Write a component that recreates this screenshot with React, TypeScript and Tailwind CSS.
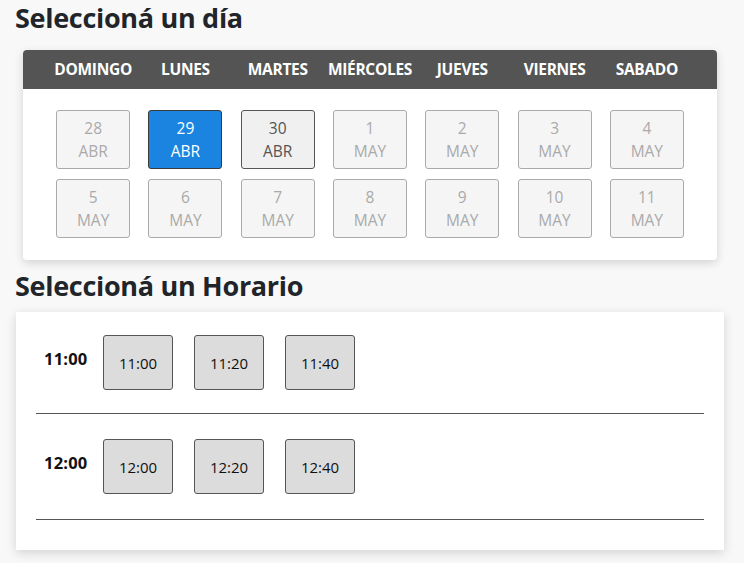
import React from "react";

const days = ["DOMINGO", "LUNES", "MARTES", "MIÉRCOLES", "JUEVES", "VIERNES", "SABADO"];
type D = { n: string; m: string; s: "off" | "sel" | "on" };
const row1: D[] = [
  { n: "28", m: "ABR", s: "off" },
  { n: "29", m: "ABR", s: "sel" },
  { n: "30", m: "ABR", s: "on" },
  { n: "1", m: "MAY", s: "off" },
  { n: "2", m: "MAY", s: "off" },
  { n: "3", m: "MAY", s: "off" },
  { n: "4", m: "MAY", s: "off" },
];
const row2: D[] = ["5", "6", "7", "8", "9", "10", "11"].map((n) => ({ n, m: "MAY", s: "off" as const }));

function DayBox({ d }: { d: D }) {
  const cls =
    d.s === "sel"
      ? "bg-[#1a84e0] border-[#3a3a3a] text-white"
      : d.s === "on"
      ? "bg-[#f0f0f0] border-[#555] text-[#555]"
      : "bg-[#f5f5f5] border-[#aaa] text-[#aaa]";
  return (
    <div className="flex justify-center">
      <div className={`w-[74px] h-[59px] border rounded-[3px] flex flex-col items-center justify-center text-[15.5px] leading-[23px] ${cls}`}>
        <span>{d.n}</span>
        <span>{d.m}</span>
      </div>
    </div>
  );
}

function Slot({ t }: { t: string }) {
  return (
    <div className="w-[70px] h-[55px] border border-[#555] rounded-[3px] bg-[#dcdcdc] flex items-center justify-center text-[15px] text-[#111] pt-[2px]">
      {t}
    </div>
  );
}

function HourRow({ h, slots, pb }: { h: string; slots: string[]; pb: string }) {
  return (
    <div className="border-b border-[#555]">
      <div className={`flex items-start ${pb}`}>
        <div className="w-[67px] pl-[8px] pt-[12px] font-bold text-[16.5px] text-[#111] tracking-[0.2px]">{h}</div>
        <div className="flex gap-[21px]">
          {slots.map((s) => (
            <Slot key={s} t={s} />
          ))}
        </div>
      </div>
    </div>
  );
}

export default function App() {
  return (
    <div
      className="min-h-[563px] bg-[#f8f8f8] text-[#212529]"
      style={{ fontFamily: '"Open Sans", "Noto Sans", sans-serif' }}
    >
      <div className="pt-[1px] pl-[15px]">
        <h1 className="text-[27px] font-bold leading-[34px] tracking-[-0.3px]">Seleccioná un día</h1>
      </div>
      <div className="ml-[23px] mr-[27px] mt-[15px] bg-white rounded-[4px] shadow-[0_3px_10px_rgba(0,0,0,0.15)]">
        <div className="h-[39px] bg-[#545454] rounded-t-[4px] px-[24px] grid grid-cols-7 items-center">
          {days.map((d) => (
            <div key={d} className="text-center text-white font-bold text-[15.5px] tracking-[-0.3px] whitespace-nowrap">
              {d}
            </div>
          ))}
        </div>
        <div className="px-[24px] pt-[21px] pb-[22px] grid grid-cols-7 gap-y-[10px]">
          {row1.map((d, i) => (
            <DayBox key={"a" + i} d={d} />
          ))}
          {row2.map((d, i) => (
            <DayBox key={"b" + i} d={d} />
          ))}
        </div>
      </div>
      <div className="pl-[15px] mt-[9px]">
        <h1 className="text-[27px] font-bold leading-[34px] tracking-[-0.3px]">Seleccioná un Horario</h1>
      </div>
      <div className="ml-[16px] mr-[20px] mt-[9px] bg-white shadow-[0_3px_10px_rgba(0,0,0,0.15)] px-[20px] pt-[23px] pb-[30px]">
        <HourRow h="11:00" slots={["11:00", "11:20", "11:40"]} pb="pb-[23px]" />
        <div className="pt-[25px]">
          <HourRow h="12:00" slots={["12:00", "12:20", "12:40"]} pb="pb-[25px]" />
        </div>
      </div>
    </div>
  );
}
